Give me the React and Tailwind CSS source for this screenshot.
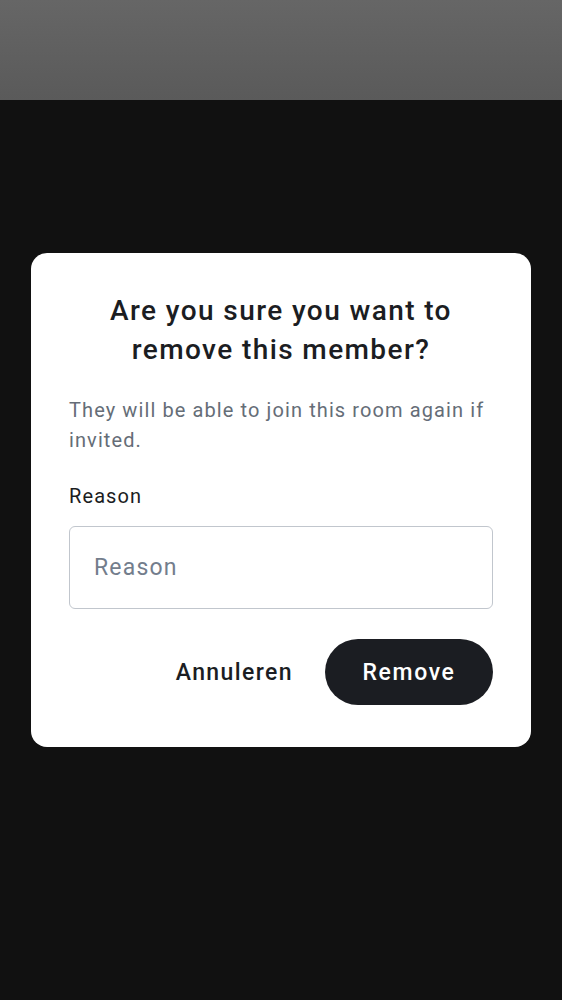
import React from 'react';

const App = () => {
  return (
    <div className="min-h-screen w-full bg-[#111111] flex flex-col" style={{ fontFamily: 'Roboto, "Noto Sans", sans-serif' }}>
      {/* Dimmed top bar */}
      <div className="h-[100px] w-full bg-gradient-to-b from-[#666666] to-[#5a5a5a]" />

      <div className="flex-1 flex flex-col items-center pt-[153px] px-[31px]">
        <div className="w-full bg-white rounded-[16px] px-[38px] pt-[38px] pb-[42px]">
          <h2 className="text-center text-[28px] leading-[39px] font-medium text-[#1b1d22] tracking-[1.4px]">
            Are you sure you want to
            <br />
            remove this member?
          </h2>

          <p className="mt-[26px] text-[20px] leading-[30px] text-[#656d77] tracking-[1.1px]">
            They will be able to join this room again if invited.
          </p>

          <label className="block mt-[29px] text-[20px] leading-[24px] text-[#1b1d22] tracking-[1.1px]">
            Reason
          </label>

          <input
            type="text"
            placeholder="Reason"
            className="mt-[18px] w-full h-[83px] rounded-[6px] border border-[#c1c6cd] px-[24px] text-[23px] text-[#1b1d22] placeholder:text-[#737d8c] outline-none tracking-[1.2px]"
          />

          <div className="mt-[30px] flex items-center justify-end gap-[32px]">
            <button className="pt-[2px] text-[23px] font-medium text-[#1b1d22] tracking-[1.4px]">
              Annuleren
            </button>
            <button className="h-[66px] w-[168px] pt-[2px] rounded-full bg-[#1b1d22] text-white text-[23px] font-medium tracking-[1.6px]">
              Remove
            </button>
          </div>
        </div>
      </div>
    </div>
  );
};

export default App;
